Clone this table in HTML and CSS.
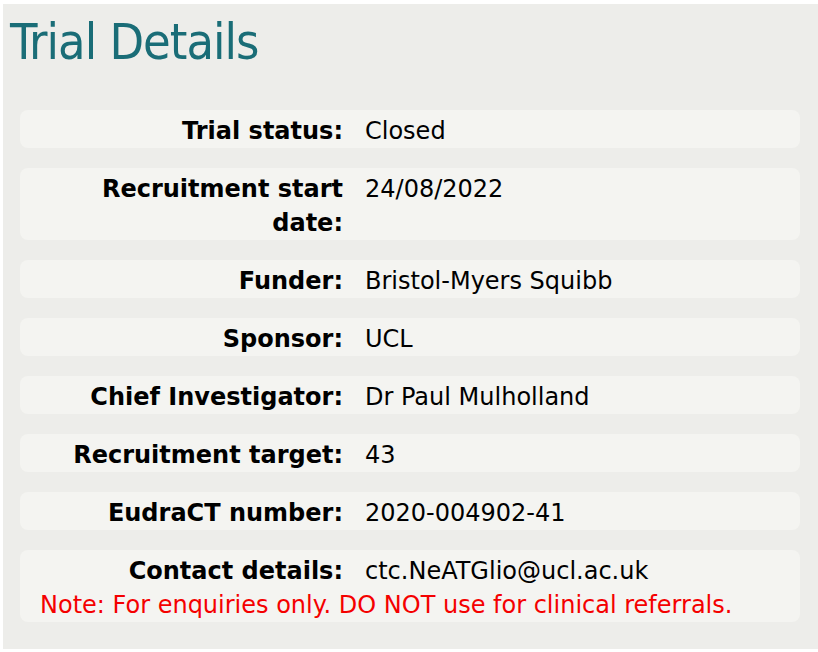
FILE: index.html
```html
<!DOCTYPE html>
<html lang="en">
<head>
<meta charset="utf-8">
<title>Trial Details</title>
<link rel="stylesheet" href="styles.css">
</head>
<body>
<div class="panel">
  <h1 class="title">Trial Details</h1>
  <div class="rows">
    <div class="row">
      <div class="label">Trial status:</div>
      <div class="value">Closed</div>
    </div>
    <div class="row">
      <div class="label">Recruitment start date:</div>
      <div class="value">24/08/2022</div>
    </div>
    <div class="row">
      <div class="label">Funder:</div>
      <div class="value">Bristol-Myers Squibb</div>
    </div>
    <div class="row">
      <div class="label">Sponsor:</div>
      <div class="value">UCL</div>
    </div>
    <div class="row">
      <div class="label">Chief Investigator:</div>
      <div class="value">Dr Paul Mulholland</div>
    </div>
    <div class="row">
      <div class="label">Recruitment target:</div>
      <div class="value">43</div>
    </div>
    <div class="row">
      <div class="label">EudraCT number:</div>
      <div class="value">2020-004902-41</div>
    </div>
    <div class="row">
      <div class="label">Contact details:</div>
      <div class="value">ctc.NeATGlio@ucl.ac.uk</div>
      <div class="note">Note: For enquiries only. DO NOT use for clinical referrals.</div>
    </div>
  </div>
</div>
</body>
</html>
```

FILE: styles.css
```css
html, body {
  margin: 0;
  padding: 0;
  background: #ffffff;
}

body {
  font-family: "DejaVu Sans", Verdana, sans-serif;
  color: #000;
}

.panel {
  margin: 4px 0 0 3px;
  height: 645px;
  box-sizing: border-box;
  padding: 0;
  background: #ededea;
}

.title {
  margin: 0;
  padding: 8px 0 0 7px;
  font-family: "DejaVu Sans Condensed", "DejaVu Sans", sans-serif;
  font-weight: normal;
  font-size: 50px;
  letter-spacing: -1px;
  line-height: 60px;
  color: #1a6d77;
}

.rows {
  margin: 38px 18px 0 17px;
  display: flex;
  flex-direction: column;
  gap: 20px;
}

.row {
  display: grid;
  grid-template-columns: 303px 1fr;
  column-gap: 22px;
  padding: 4px 20px 0;
  background: #f4f4f1;
  border-radius: 8px;
  font-size: 24px;
  line-height: 34px;
}

.label {
  font-weight: bold;
  text-align: right;
}

.note {
  grid-column: 1 / -1;
  color: #f40000;
}
```
